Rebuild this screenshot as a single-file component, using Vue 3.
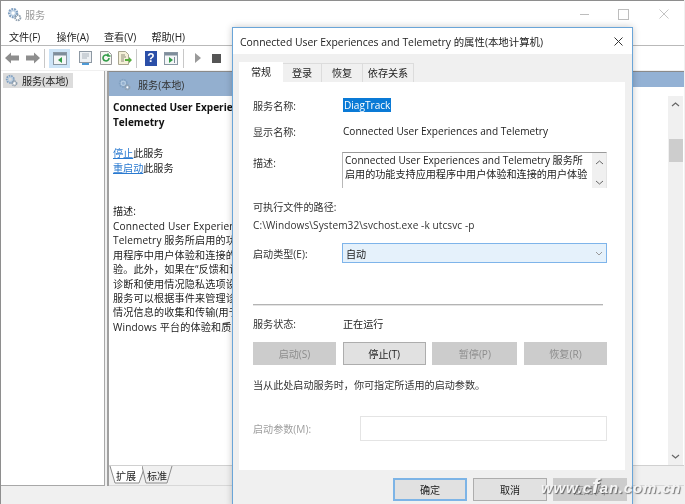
<script setup>
const menus = ['文件(F)', '操作(A)', '查看(V)', '帮助(H)']
const tabs = ['常规', '登录', '恢复', '依存关系']
const desc = [
  'Connected User Experiences and',
  'Telemetry 服务所启用的功能支持应',
  '用程序中用户体验和连接的用户体',
  '验。此外，如果在“反馈和诊断”下启用',
  '诊断和使用情况隐私选项设置，则此',
  '服务可以根据事件来管理诊断和使用',
  '情况信息的收集和传输(用于改进',
  'Windows 平台的体验和质量)。'
]
const actions = [
  { label: '启动(S)', off: true, w: 83 },
  { label: '停止(T)', off: false, w: 83 },
  { label: '暂停(P)', off: true, w: 85 },
  { label: '恢复(R)', off: true, w: 83 }
]
</script>

<template>
  <div class="screen">
    <svg class="defs" width="0" height="0">
      <defs>
        <symbol id="gears" viewBox="0 0 16 16">
          <circle cx="6.5" cy="6.5" r="4.2" fill="none" stroke="#7f9fc0" stroke-width="2.6" stroke-dasharray="2 .9"/>
          <circle cx="6.5" cy="6.5" r="2.6" fill="none" stroke="#b7cde2" stroke-width="1.4"/>
          <circle cx="11.5" cy="11.5" r="2.8" fill="none" stroke="#8f9fae" stroke-width="2" stroke-dasharray="1.6 .8"/>
          <circle cx="11.5" cy="11.5" r="1.3" fill="#fff"/>
        </symbol>
      </defs>
    </svg>

    <div class="main">
      <header class="titlebar">
        <svg class="ico-title" width="15" height="15"><use href="#gears"/></svg>
        <span class="title-text">服务</span>
        <div class="controls">
          <span class="min"></span>
          <span class="max"></span>
          <svg width="10" height="10" viewBox="0 0 10 10"><path d="M.5.5l9 9M9.5.5l-9 9" stroke="#c4c4c4" fill="none"/></svg>
        </div>
      </header>

      <nav class="menubar">
        <span v-for="m in menus" :key="m">{{ m }}</span>
      </nav>

      <div class="toolbar">
        <svg width="14" height="12" viewBox="0 0 14 12"><path d="M0 6l6-5.500v3h8v5H6v3z" fill="#8e8e8e"/></svg>
        <svg class="t-fwd" width="14" height="12" viewBox="0 0 14 12"><path d="M14 6L8 .5v3H0v5h8v3z" fill="#8e8e8e"/></svg>
        <i class="sep s1"></i>
        <span class="selected">
          <svg width="14" height="13" viewBox="0 0 14 13"><rect x=".5" y=".5" width="13" height="12" fill="#f4f6f8" stroke="#8a97a3"/><rect x="1" y="1" width="12" height="2.500" fill="#7e8d9b"/><path d="M9 5L5 8l4 3z" fill="#2f9a45"/></svg>
        </span>
        <svg class="t-a" width="13" height="14" viewBox="0 0 13 14"><rect x=".5" y=".5" width="12" height="11" fill="#eef1f4" stroke="#8d98a3"/><path d="M3 3h7M3 5h7M3 7h5" stroke="#aab3bc"/><rect x="3" y="12" width="7" height="2" fill="#4e9ad6"/></svg>
        <svg class="t-b" width="12" height="14" viewBox="0 0 12 14"><path d="M.5.5h8l3 3v10H.5z" fill="#f6f6f2" stroke="#9a9a9a"/><path d="M9 7a3 3 0 1 1-1-2.300M8 2.500V5h2.500" fill="none" stroke="#2f9a45" stroke-width="1.600"/></svg>
        <svg class="t-c" width="14" height="14" viewBox="0 0 14 14"><path d="M.5.5h7l3 3v10h-10z" fill="#f5f0d8" stroke="#a8a58f"/><path d="M3 4h4M3 6h5M3 8h3M3 10h3" stroke="#8f8d78"/><path d="M7 8h4V6l3 3-3 3v-2H7z" fill="#55ad3c"/></svg>
        <i class="sep s2"></i>
        <span class="help">?</span>
        <svg class="t-d" width="14" height="13" viewBox="0 0 14 13"><rect x=".5" y=".5" width="13" height="12" fill="#f4f6f8" stroke="#8a97a3"/><rect x="1" y="1" width="12" height="2.500" fill="#7e8d9b"/><path d="M5 5l4 3-4 3z" fill="#2f9a45"/><path d="M10.500 5v6" stroke="#7e8d9b"/></svg>
        <i class="sep s3"></i>
        <svg class="t-play" width="6" height="10" viewBox="0 0 6 10"><path d="M0 0l6 5-6 5z" fill="#9a9a9a"/></svg>
        <span class="t-stop"></span>
        <span class="t-pause"></span>
      </div>

      <div class="panes">
        <aside class="tree">
          <div class="tree-item">
            <svg width="13" height="13"><use href="#gears"/></svg>
            <span>服务(本地)</span>
          </div>
        </aside>

        <section class="detail">
          <div class="banner">
            <svg width="13" height="13"><use href="#gears"/></svg>
            <span>服务(本地)</span>
          </div>
          <div class="body-row">
            <div class="info">
              <h2>Connected User Experiences and<br>Telemetry</h2>
              <p class="links"><a>停止</a>此服务<br><a>重启动</a>此服务</p>
              <p class="desc-head">描述:</p>
              <p v-for="d in desc" :key="d" class="desc-line">{{ d }}</p>
            </div>
            <div class="vscroll">
              <svg width="9" height="5" viewBox="0 0 9 5"><path d="M1 4l3.500-3L8 4" fill="none" stroke="#666" stroke-width="1.200"/></svg>
              <span class="thumb"></span>
              <svg class="down" width="9" height="5" viewBox="0 0 9 5"><path d="M1 1l3.500 3L8 1" fill="none" stroke="#666" stroke-width="1.200"/></svg>
            </div>
          </div>
          <div class="sheet-tabs">
            <span class="sheet off">
              <svg width="34" height="18" viewBox="0 0 34 18"><path d="M0 0l4 17h21l5-17" fill="#f0f0f0" stroke="#8c8c8c"/></svg>
              <b>标准</b>
            </span>
            <span class="sheet on">
              <svg width="37" height="18" viewBox="0 0 37 18"><path d="M1 0l5 17h24l6-17" fill="#fff" stroke="#8c8c8c"/></svg>
              <b>扩展</b>
            </span>
          </div>
        </section>
      </div>
      <footer class="status"></footer>
    </div>

    <div class="dialog">
      <div class="d-title">
        <span>Connected User Experiences and Telemetry 的属性(本地计算机)</span>
        <svg width="9" height="9" viewBox="0 0 9 9"><path d="M.5.5l8 8M8.500.5l-8 8" stroke="#333" fill="none"/></svg>
      </div>
      <div class="d-body">
        <div class="d-tabs">
          <span v-for="(t, i) in tabs" :key="t" :class="['d-tab', 'w' + i, { active: i === 0 }]">{{ t }}</span>
        </div>
        <div class="page">
          <div class="row r-name"><label>服务名称:</label><span class="sel">DiagTrack</span></div>
          <div class="row r-show"><label>显示名称:</label><span>Connected User Experiences and Telemetry</span></div>
          <div class="row r-desc">
            <label>描述:</label>
            <div class="textbox">
              <p>Connected User Experiences and Telemetry 服务所<br>启用的功能支持应用程序中用户体验和连接的用户体验</p>
              <div class="tb-scroll">
                <svg width="9" height="5" viewBox="0 0 9 5"><path d="M1 4l3.500-3L8 4" fill="none" stroke="#666"/></svg>
                <svg width="9" height="5" viewBox="0 0 9 5"><path d="M1 1l3.500 3L8 1" fill="none" stroke="#666"/></svg>
              </div>
            </div>
          </div>
          <div class="line l-exe">可执行文件的路径:</div>
          <div class="line l-path">C:\Windows\System32\svchost.exe -k utcsvc -p</div>
          <div class="row r-type">
            <label>启动类型(E):</label>
            <div class="combo">
              <span>自动</span>
              <svg width="8" height="5" viewBox="0 0 8 5"><path d="M1 1l3 3 3-3" fill="none" stroke="#999"/></svg>
            </div>
          </div>
          <hr class="rule">
          <div class="row r-status"><label>服务状态:</label><span>正在运行</span></div>
          <div class="actions">
            <button v-for="a in actions" :key="a.label" :class="{ off: a.off }" :style="{ width: a.w + 'px' }">{{ a.label }}</button>
          </div>
          <div class="line l-hint">当从此处启动服务时，你可指定所适用的启动参数。</div>
          <div class="row r-param">
            <label>启动参数(M):</label>
            <div class="param"></div>
          </div>
        </div>
        <div class="d-foot">
          <button class="primary">确定</button>
          <button>取消</button>
          <button class="off">应用(A)</button>
        </div>
      </div>
    </div>

    <div class="mark">www.c<span>f</span>an.com.cn</div>
  </div>
</template>

<style>
html, body { margin: 0; background: #f0f0f0; overflow: hidden; }
</style>

<style scoped>
.screen {
  position: relative;
  width: 685px;
  height: 504px;
  overflow: hidden;
  font-family: "Open Sans", "Noto Sans CJK SC", sans-serif;
  font-size: 10.1px;
  color: #222;
  filter: blur(0.35px);
}
.defs { position: absolute; }
p, h2 { margin: 0; }
.main {
  width: 684px;
  height: 504px;
  display: flex;
  flex-direction: column;
  background: #f0f0f0;
  border-top: 1px solid #8e8e8e;
  border-left: 1px solid #8e8e8e;
  box-sizing: border-box;
}
.titlebar {
  height: 26px;
  flex: none;
  display: flex;
  align-items: center;
  background: #fff;
  padding-left: 6px;
}
.title-text { margin-left: 3px; color: #9a9a9a; }
.controls { margin-left: auto; display: flex; align-items: center; margin-right: 15px; }
.min { width: 9px; height: 1px; background: #bdbdbd; margin-right: 29px; }
.max { width: 9px; height: 9px; border: 1px solid #bdbdbd; margin-right: 30px; }
.menubar {
  height: 18px;
  flex: none;
  display: flex;
  gap: 12px;
  align-items: center;
  padding-left: 8px;
  background: #fff;
  border-bottom: 1px solid #b9b9b9;
  box-sizing: content-box;
}
.menubar span { width: 35.500px; white-space: nowrap; }
.toolbar {
  height: 24px;
  flex: none;
  display: flex;
  align-items: center;
  background: #fff;
  padding-left: 4px;
}
.toolbar > * { flex: none; }
.t-fwd { margin-left: 7px; }
.sep { width: 1px; height: 19px; background: #c8c8c8; }
.s1 { margin-left: 4px; }
.selected {
  width: 21px;
  height: 19px;
  margin-left: 4px;
  background: #cde4f7;
  display: flex;
  align-items: center;
  justify-content: center;
}
.t-a { margin-left: 9px; }
.t-b { margin-left: 8px; }
.t-c { margin-left: 6px; }
.s2 { margin-left: 4px; }
.help {
  width: 12px;
  height: 15px;
  margin-left: 8px;
  background: #2b4fa8;
  color: #fff;
  font: bold 12px/15px "Liberation Sans", sans-serif;
  text-align: center;
}
.t-d { margin-left: 7px; }
.s3 { margin-left: 5px; }
.t-play { margin-left: 11px; }
.t-stop { width: 9px; height: 9px; margin-left: 11px; background: #555; }
.t-pause { width: 6px; height: 9px; margin-left: 11px; background: #777; }
.panes {
  flex: 1;
  min-height: 0;
  display: flex;
  gap: 2px;
  padding-top: 1px;
  background: #f0f0f0;
}
.tree {
  width: 104px;
  background: #fff;
  border-right: 1px solid #a8a8a8;
  border-bottom: 1px solid #a8a8a8;
  box-sizing: border-box;
  padding: 2px 0 0 2px;
}
.tree-item {
  width: 70px;
  height: 15px;
  display: flex;
  align-items: center;
  gap: 4px;
  background: #dcdcdc;
  padding-left: 2px;
  box-sizing: border-box;
  white-space: nowrap;
}
.detail {
  flex: 1;
  min-width: 0;
  display: flex;
  flex-direction: column;
  border-left: 2px solid #a0a0a0;
  border-top: 1px solid #8a8a8a;
  background: #fff;
}
.banner {
  height: 24px;
  flex: none;
  display: flex;
  align-items: center;
  gap: 7px;
  padding-left: 9px;
  background:
    linear-gradient(#93afcf, #93afcf) left top / 400px 100% no-repeat,
    linear-gradient(#93b1d4, #93b1d4) right top / 100% 15px no-repeat;
  color: #333;
}
.body-row { flex: 1; min-height: 0; display: flex; }
.info { width: 124px; padding: 4px 0 0 4px; flex: none; white-space: nowrap; }
h2 {
  font: bold 10.1px/15px "Open Sans", "Noto Sans CJK SC", sans-serif;
  color: #111;
  height: 30px;
}
.links { margin-top: 16px; line-height: 15px; }
.links a { color: #2a7ad0; text-decoration: underline; }
.desc-head { margin-top: 28px; line-height: 15px; }
.desc-line { line-height: 14.4px; letter-spacing: .15px; }
.vscroll {
  width: 15px;
  margin-left: auto;
  margin-right: 1px;
  background: #f0f0f0;
  display: flex;
  flex-direction: column;
  align-items: center;
  padding-top: 6px;
  box-sizing: border-box;
}
.thumb { width: 14px; height: 23px; background: #cdcdcd; margin-top: 32px; }
.down { margin-top: auto; margin-bottom: 6px; }
.sheet-tabs {
  height: 19px;
  flex: none;
  display: flex;
  background: #f0f0f0;
  border-top: 1px solid #d0d0d0;
  border-bottom: 1px solid #d8d8d8;
}
.sheet { position: relative; height: 18px; display: flex; align-items: center; }
.sheet svg { position: absolute; left: 0; top: 0; }
.sheet b { position: relative; font-weight: 400; color: #222; }
.sheet.on { order: 1; width: 36px; }
.sheet.on b { margin-left: 7px; }
.sheet.off { order: 2; width: 34px; margin-left: -3px; }
.sheet.off b { margin-left: 5px; }
.status { height: 18px; flex: none; }

.dialog {
  position: absolute;
  left: 232px;
  top: 27px;
  width: 401px;
  height: 480px;
  box-sizing: border-box;
  background: #f0f0f0;
  border: 1px solid #6aa5d8;
  box-shadow: 0 0 7px rgba(0,0,0,.22);
  display: flex;
  flex-direction: column;
}
.d-title {
  height: 26px;
  flex: none;
  background: #fff;
  display: flex;
  align-items: center;
  justify-content: space-between;
  padding: 0 9px 0 7px;
  font-size: 10.4px;
  white-space: nowrap;
}
.d-body { flex: 1; min-height: 0; padding: 8px 7px 0 6px; display: flex; flex-direction: column; }
.d-tabs { display: flex; height: 20px; flex: none; }
.d-tab {
  box-sizing: border-box;
  height: 19px;
  margin-top: 1px;
  background: #f0f0f0;
  border: 1px solid #dcdcdc;
  border-left: 0;
  border-bottom: 0;
  text-align: center;
  line-height: 18px;
}
.d-tab.active { background: #fff; height: 20px; margin-top: 0; border: 0; line-height: 20px; }
.w0 { width: 44px; }
.w1 { width: 39px; }
.w2 { width: 41px; }
.w3 { width: 51px; }
.page {
  width: 386px;
  height: 388px;
  flex: none;
  background: #fff;
  box-sizing: border-box;
  padding-left: 14px;
  overflow: hidden;
}
.row { display: flex; align-items: center; }
.row label { width: 89px; flex: none; white-space: nowrap; color: #333; }
.row span { white-space: nowrap; }
.r-name { height: 20px; margin-top: 13px; }
.sel { background: #0a7ad6; color: #fff; height: 14px; line-height: 14px; padding: 0 1px; margin-left: 1px; }
.r-show { height: 20px; margin-top: 6px; }
.r-show span { margin-left: 1px; }
.r-desc { height: 36px; margin-top: 11px; align-items: flex-start; }
.r-desc label { margin-top: 3px; }
.textbox {
  width: 265px;
  height: 36px;
  display: flex;
  box-sizing: border-box;
  border-top: 1px solid #9a9a9a;
  border-left: 1px solid #b8b8b8;
  border-right: 1px solid #e4e4e4;
  overflow: hidden;
}
.textbox p { flex: 1; min-width: 0; padding: 0 0 0 2px; line-height: 14px; white-space: nowrap; }
.tb-scroll {
  width: 14px;
  flex: none;
  background: #f0f0f0;
  display: flex;
  flex-direction: column;
  align-items: center;
  justify-content: space-between;
  padding: 7px 0 3px;
  box-sizing: border-box;
}
.line { height: 16px; line-height: 16px; white-space: nowrap; color: #333; }
.l-exe { margin-top: 11px; }
.l-path { margin-top: 2px; letter-spacing: .07px; }
.r-type { height: 20px; margin-top: 10px; }
.combo {
  width: 265px;
  height: 20px;
  box-sizing: border-box;
  background: #e5f1fb;
  border: 1px solid #7eb4ea;
  display: flex;
  align-items: center;
  justify-content: space-between;
  padding: 0 3px;
}
.rule { width: 350px; height: 2px; margin: 41px 0 0; border: 0; background: #b4b4b4; border-bottom: 1px solid #e4e4e4; box-sizing: border-box; }
.r-status { height: 16px; margin-top: 9px; }
.r-status span { margin-left: 1px; }
.actions { display: flex; margin-top: 11px; width: 354px; justify-content: space-between; }
button {
  height: 23px;
  box-sizing: border-box;
  background: #e1e1e1;
  border: 1px solid #adadad;
  font: inherit;
  color: #222;
  padding: 0;
}
button.off { background: #cccccc; border-color: #cccccc; color: #8d8d8d; }
.l-hint { margin-top: 12px; }
.r-param { height: 25px; margin-top: 23px; }
.r-param label { width: 107px; color: #a0a0a0; }
.param { width: 247px; height: 25px; box-sizing: border-box; border: 1px solid #e4e4e4; }
.d-foot { display: flex; gap: 6px; padding: 8px 0 0 154px; margin-right: -7px; }
.d-foot button { width: 74px; }
.d-foot button.primary { border: 2px solid #7db4e6; }
.mark {
  position: absolute;
  left: 541px;
  top: 479px;
  font: italic bold 15px/18px "Liberation Sans", sans-serif;
  letter-spacing: .8px;
  color: #f4f4f4;
  text-shadow: 1px 1px 1px rgba(0,0,0,.5);
  white-space: nowrap;
}
.mark span { font-size: 21px; line-height: 10px; }
</style>
